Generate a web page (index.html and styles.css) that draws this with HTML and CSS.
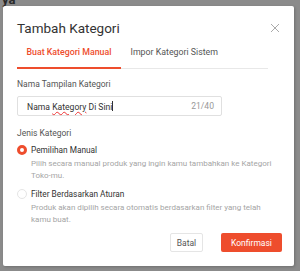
FILE: index.html
```html
<!DOCTYPE html>
<html lang="en">
<head>
    <meta charset="UTF-8">
    <meta name="viewport" content="width=device-width, initial-scale=1.0">
    <title>Tambah Kategori</title>
    <link rel="stylesheet" href="styles.css">
</head>
<body>
    <div class="backdrop-text">ya</div>

    <div class="modal">
        <div class="modal-header">
            <h2 class="modal-title">Tambah Kategori</h2>
            <svg class="close" width="10" height="10" viewBox="0 0 10 10">
                <path d="M1 1 L9 9 M9 1 L1 9" stroke="#aaa" stroke-width="1" fill="none"/>
            </svg>
        </div>

        <div class="tabs">
            <div class="tab active">Buat Kategori Manual</div>
            <div class="tab">Impor Kategori Sistem</div>
        </div>

        <div class="field">
            <label class="field-label">Nama Tampilan Kategori</label>
            <div class="input">
                <span class="input-value">Nama <span class="typo">Kategory</span> Di Sini<span class="caret"></span></span>
                <span class="counter">21/40</span>
            </div>
        </div>

        <div class="field">
            <div class="field-label">Jenis Kategori</div>
            <div class="radio-option">
                <span class="radio checked"></span>
                <div>
                    <div class="radio-title">Pemilihan Manual</div>
                    <div class="radio-desc">Pilih secara manual produk yang ingin kamu tambahkan ke Kategori Toko-mu.</div>
                </div>
            </div>
            <div class="radio-option">
                <span class="radio"></span>
                <div>
                    <div class="radio-title">Filter Berdasarkan Aturan</div>
                    <div class="radio-desc">Produk akan dipilih secara otomatis berdasarkan filter yang telah kamu buat.</div>
                </div>
            </div>
        </div>

        <div class="modal-footer">
            <button class="btn btn-cancel">Batal</button>
            <button class="btn btn-primary">Konfirmasi</button>
        </div>
    </div>
</body>
</html>
```

FILE: styles.css
```css
body { margin: 0; background: #8b8b8b; font-family: Roboto, "Liberation Sans", sans-serif; height: 271px; padding: 6px 0 0 3px; box-sizing: border-box; position: relative; overflow: hidden; }
.backdrop-text { position: absolute; left: 2px; top: -8px; font-size: 13px; font-weight: bold; color: #2a2a2a; }
.modal { width: 291px; height: 260px; background: #fff; border-radius: 2px; padding: 0 14px; box-sizing: border-box; position: relative; box-shadow: 1px 1px 3px rgba(0,0,0,0.2); }
.modal-header { display: flex; justify-content: space-between; align-items: center; height: 38px; padding-top: 6px; box-sizing: border-box; }
.modal-title { margin: 0; font-size: 13.5px; font-weight: 400; color: #333; }
.tabs { display: flex; border-bottom: 1px solid #e8e8e8; margin-right: 12px; }
.tab { font-size: 8.8px; color: #555; padding: 3px 9.5px 10px; }
.tab.active { color: #ee4d2d; font-weight: 500; border-bottom: 2px solid #ee4d2d; margin-bottom: -1px; }
.field { margin-top: 10px; }
.field-label { display: block; font-size: 8.5px; color: #555; margin-bottom: 7px; }
.input { display: flex; justify-content: space-between; align-items: center; width: 205px; height: 20px; border: 1px solid #e0e0e0; border-radius: 2px; padding: 0 7px 0 9px; box-sizing: border-box; font-size: 8.6px; }
.input-value { color: #333; }
.caret { display: inline-block; width: 1px; height: 10px; background: #333; vertical-align: -1px; }
.typo { text-decoration: underline wavy #e33; text-decoration-thickness: 1px; }
.counter { color: #999; }
.field + .field { margin-top: 12px; }
.radio-option { display: flex; gap: 4px; margin-bottom: 8px; }
.radio { flex: none; width: 10px; height: 10px; border-radius: 50%; border: 1px solid #e5e5e5; box-sizing: border-box; }
.radio.checked { border: 3px solid #ee4d2d; }
.radio-title { font-size: 8.3px; color: #333; }
.radio-desc { font-size: 8px; color: #a5a5a5; line-height: 11.5px; margin-top: 3px; }
.modal-footer { display: flex; justify-content: flex-end; gap: 18px; margin-top: 6px; margin-right: -2px; }
.btn { font-family: inherit; font-size: 8.5px; height: 19px; border-radius: 2px; cursor: pointer; padding: 0; }
.btn-cancel { width: 33px; background: #fff; border: 1px solid #e5e5e5; color: #555; }
.btn-primary { width: 61px; background: #ee4d2d; border: none; color: #fff; }
```
